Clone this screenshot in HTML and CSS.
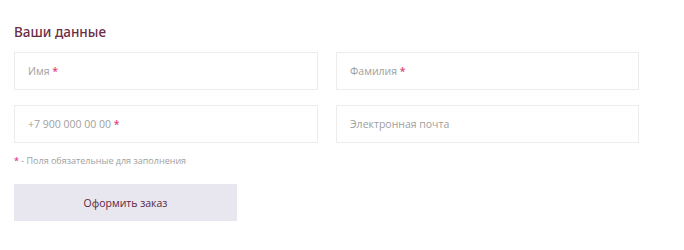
FILE: index.html
```html
<!DOCTYPE html>
<html lang="ru">
<head>
    <meta charset="UTF-8">
    <meta name="viewport" content="width=device-width, initial-scale=1.0">
    <title>Ваши данные</title>
    <link rel="stylesheet" href="styles.css">
</head>
<body>
    <!-- Customer form -->
    <form class="order-form">
        <h3 class="form-title">Ваши данные</h3>

        <div class="fields">
            <div class="field"><span class="ph">Имя <b class="req">*</b></span></div>
            <div class="field"><span class="ph">Фамилия <b class="req">*</b></span></div>
            <div class="field"><span class="ph">+7 900 000 00 00 <b class="req">*</b></span></div>
            <div class="field"><span class="ph">Электронная почта</span></div>
        </div>

        <p class="note"><b class="req">*</b> - Поля обязательные для заполнения</p>

        <button type="button" class="submit-btn">Оформить заказ</button>
    </form>
</body>
</html>
```

FILE: styles.css
```css
* {
    margin: 0;
    padding: 0;
    box-sizing: border-box;
}

body {
    font-family: 'Open Sans', 'Noto Sans', sans-serif;
    background: #fff;
    padding: 22px 14px 0 14px;
}

.order-form {
    width: 625px;
}

/* Heading */
.form-title {
    font-family: 'Noto Sans', sans-serif;
    font-size: 13.5px;
    font-weight: 500;
    color: #6b2d45;
    line-height: 20px;
    margin-bottom: 10px;
}

/* Inputs grid */
.fields {
    display: grid;
    grid-template-columns: 304px 303px;
    column-gap: 18px;
    row-gap: 15px;
}

.field {
    height: 38px;
    border: 1px solid #ececec;
    display: flex;
    align-items: center;
    padding-left: 13px;
}

.ph {
    font-size: 10.5px;
    color: #a0a0a0;
}

.req {
    color: #e0457e;
    font-weight: 600;
}

.note {
    font-size: 9px;
    color: #a0a0a0;
    margin-top: 11px;
    line-height: 13px;
}

/* Submit */
.submit-btn {
    display: block;
    margin-top: 17px;
    width: 223px;
    height: 37px;
    border: none;
    background: #e8e6ef;
    color: #5a2740;
    font-family: 'Open Sans', 'Noto Sans', sans-serif;
    font-size: 10.5px;
    font-weight: 500;
    cursor: pointer;
}
```
